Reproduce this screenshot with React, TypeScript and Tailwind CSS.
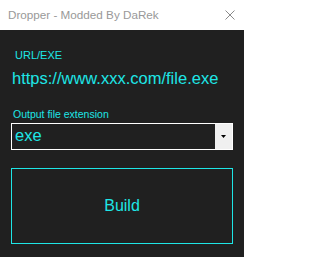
export default function App() {
  return (
    <div className="w-[244px] h-[257px] flex flex-col bg-[#202020] font-['Liberation_Sans',Arial,sans-serif] overflow-hidden">
      {/* title bar */}
      <div className="h-[30px] bg-white flex items-center justify-between pl-[8px] pr-[9px] shrink-0">
        <span className="text-[11.7px] text-[#999999] leading-none">Dropper - Modded By DaRek</span>
        <svg width="10" height="10" viewBox="0 0 10 10" className="mb-[1px]">
          <path d="M0.5 0.5 L9.5 9.5 M9.5 0.5 L0.5 9.5" stroke="#8a8a8a" strokeWidth="1" fill="none" />
        </svg>
      </div>

      <div className="flex flex-col px-[11px] text-[#1ee6e6]">
        <div className="pl-[4px] pt-[20px] text-[11px] leading-none">URL/EXE</div>
        <div className="pl-[1px] pt-[8px] text-[16.5px] leading-[18px]">https://www.xxx.com/file.exe</div>

        <div className="pl-[2px] pt-[22px] text-[10.5px] leading-none">Output file extension</div>
        <div className="mt-[3px] h-[27px] border border-white flex">
          <div className="flex-1 flex items-center pl-[3px] text-[16.5px] leading-none pb-[1px]">exe</div>
          <div className="w-[17px] ml-[1px] bg-[#f0f0f0] flex items-center justify-center">
            <svg width="5" height="3" viewBox="0 0 5 3">
              <path d="M0 0 H5 L2.5 3 Z" fill="#000" />
            </svg>
          </div>
        </div>

        <button className="mt-[18px] h-[76px] border border-[#1ee6e6] flex items-center justify-center text-[16px] text-[#1ee6e6] bg-transparent">
          Build
        </button>
      </div>
    </div>
  );
}
